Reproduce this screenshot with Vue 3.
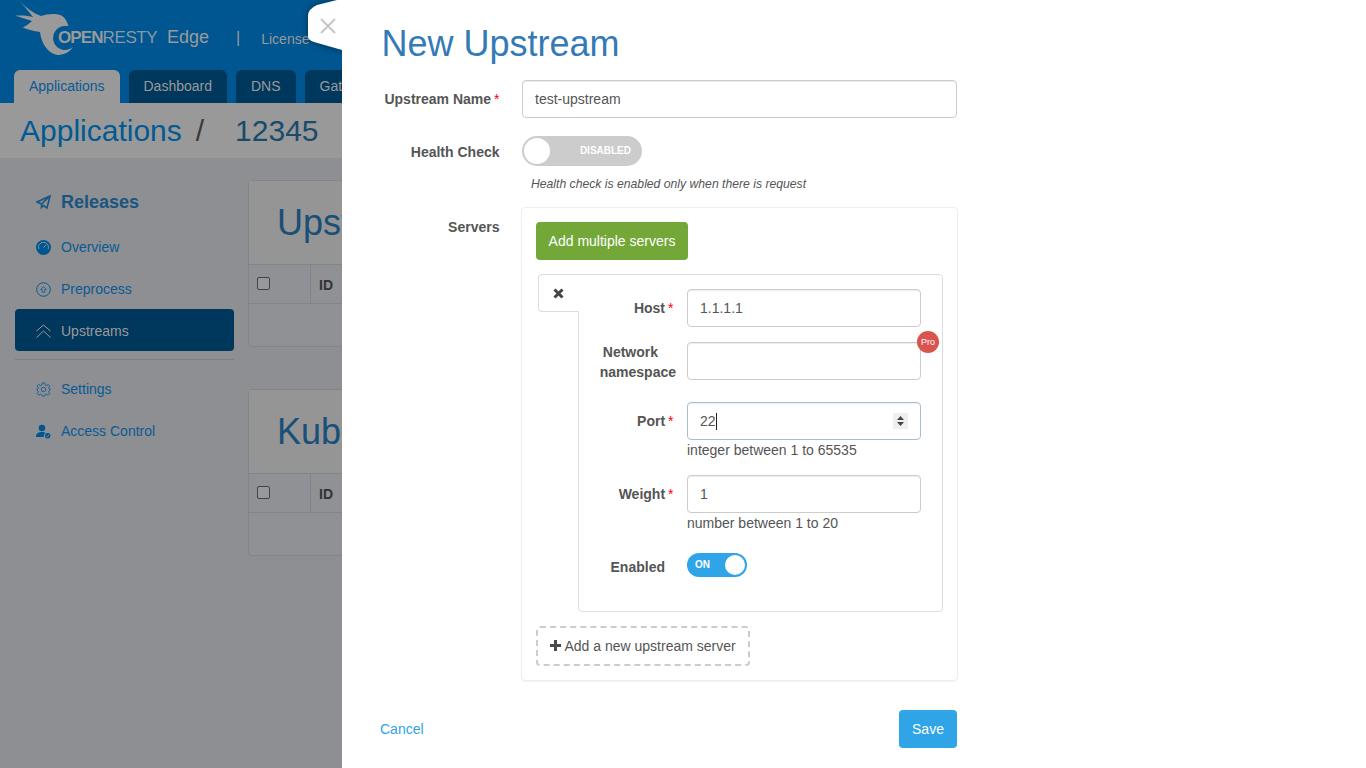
<script setup>
const navTabs = ['Dashboard', 'DNS', 'Gateway']

const sideItems = [
  { label: 'Overview', icon: 'gauge' },
  { label: 'Preprocess', icon: 'circle' },
  { label: 'Upstreams', icon: 'chevrons', active: true },
]
</script>

<template>
  <div class="page">
    <header class="topbar">
      <div class="brand">
        <svg class="bird" width="62" height="58" viewBox="14 0 62 58">
          <path fill="#9a9a9a" d="M20 1 C26 8 33 13 41 16 C47 14 55 13 60 15 C64 16 67 21 68.500 26 L64 26 A12 12 0 1 0 73 47 C69 53 63 55 57 55 C47 53 41 42 40 32 C34 31 28 30 22.700 27.500 C26 26 29 24 32 21 C26 19 20 17 15 15.700 C22 15 28 15.500 33 17 C29 12 24 6 20 1 Z" />
        </svg>
        <span class="wordmark"><b>OPEN</b><span class="resty">RESTY</span></span>
        <span class="edge">Edge</span>
        <span class="sep">|</span>
        <span class="license">License</span>
      </div>
      <nav class="tabs">
        <a class="tab tab-active">Applications</a>
        <a v-for="t in navTabs" :key="t" class="tab">{{ t }}</a>
      </nav>
    </header>

    <div class="crumbs">
      <span class="crumb-link">Applications</span>
      <span class="crumb-sep">/</span>
      <span class="crumb-app">12345</span>
    </div>

    <div class="content">
      <aside class="sidebar">
        <div class="side-head">
          <svg width="15" height="15" viewBox="0 0 15 15">
            <path fill="none" stroke="#1a5580" stroke-width="1.6" d="M14 1 L1 7 L5.500 9 L14 1 L11 13 L7.500 10.500 L5.500 12.500 L5.500 9" />
          </svg>
          <span>Releases</span>
        </div>
        <a v-for="item in sideItems" :key="item.label" class="side-item" :class="{ active: item.active }">
          <svg v-if="item.icon === 'gauge'" width="15" height="15" viewBox="0 0 15 15">
            <circle cx="7.500" cy="7.500" r="7.500" fill="#00568f" />
            <path fill="none" stroke="#8d8f93" stroke-width="1" d="M2.800 9 A5 5 0 1 1 12.200 9" />
            <path stroke="#8d8f93" stroke-width="1" d="M7.500 7.500 L10 5" />
          </svg>
          <svg v-else-if="item.icon === 'circle'" width="15" height="15" viewBox="0 0 15 15">
            <circle cx="7.500" cy="7.500" r="6.800" fill="none" stroke="#0a5a94" stroke-width="1" />
            <path fill="none" stroke="#0a5a94" stroke-width=".8" d="M7.500 4.500 L10.300 7.500 H8.800 V10.300 H6.200 V7.500 H4.700 Z" />
          </svg>
          <svg v-else width="15" height="15" viewBox="0 0 15 15">
            <path fill="none" stroke="#9a9a9a" stroke-width="1" d="M.5 7 L7.500 1 L14.500 7 M.5 13.500 L7.500 7 L14.500 13.500" />
          </svg>
          <span>{{ item.label }}</span>
        </a>
        <div class="side-rule"></div>
        <a class="side-item">
          <svg width="15" height="15" viewBox="0 0 24 24">
            <circle cx="12" cy="12" r="3.600" fill="none" stroke="#0a5a94" stroke-width="1.400" />
            <path fill="none" stroke="#0a5a94" stroke-width="1.400" d="M10 1.500 H14 L14.600 4.700 L16.900 5.700 L19.600 3.900 L22.100 6.400 L20.300 9.100 L21.300 11.400 L23 12 L21.300 13.600 L20.300 15.900 L22.100 18.600 L19.600 21.100 L16.900 19.300 L14.600 20.300 L14 22.500 H10 L9.400 20.300 L7.100 19.300 L4.400 21.100 L1.900 18.600 L3.700 15.900 L2.700 13.600 L1 12 L2.700 11.400 L3.700 9.100 L1.900 6.400 L4.400 3.900 L7.100 5.700 L9.400 4.700 Z" />
          </svg>
          <span>Settings</span>
        </a>
        <a class="side-item">
          <svg width="15" height="15" viewBox="0 0 15 15">
            <circle cx="6" cy="4" r="3.300" fill="#00568f" />
            <path fill="#00568f" d="M0 13 C0 9 3 8 6 8 C8 8 9 8.500 9.500 9 C8 10 7.500 11.500 8 13 Z" />
            <circle cx="11.700" cy="11.700" r="2.700" fill="#00568f" />
            <path fill="none" stroke="#8d8f93" stroke-width=".9" d="M10.400 11.800 L11.400 12.800 L13 10.800" />
          </svg>
          <span>Access Control</span>
        </a>
      </aside>

      <main class="main">
        <section class="card">
          <h2>Upstreams</h2>
          <div class="thead">
            <div class="check-cell"><span class="check"></span></div>
            <div class="id-cell">ID</div>
          </div>
          <div class="tbody"></div>
        </section>
        <section class="card">
          <h2>Kubernetes</h2>
          <div class="thead">
            <div class="check-cell"><span class="check"></span></div>
            <div class="id-cell">ID</div>
          </div>
          <div class="tbody"></div>
        </section>
      </main>
    </div>

    <!-- side panel sits over the dimmed page -->
    <div class="close-tab">
      <div class="close-shape">
        <svg width="16" height="16" viewBox="0 0 16 16">
          <path stroke="#c4c4c4" stroke-width="1.800" d="M1 1 L15 15 M15 1 L1 15" />
        </svg>
      </div>
    </div>

    <div class="drawer">
      <h1>New Upstream</h1>

      <div class="row">
        <label class="label req">Upstream Name</label>
        <div class="control"><input class="input" value="test-upstream" /></div>
      </div>

      <div class="row row-health">
        <label class="label">Health Check</label>
        <div class="control">
          <div class="switch switch-off"><span class="knob"></span><span class="switch-text">DISABLED</span></div>
          <p class="hint">Health check is enabled only when there is request</p>
        </div>
      </div>

      <div class="row row-servers">
        <label class="label label-servers">Servers</label>
        <div class="panel">
          <button class="btn-green">Add multiple servers</button>

          <div class="server">
            <div class="server-tab">
              <svg width="11" height="11" viewBox="0 0 11 11">
                <path stroke="#444" stroke-width="3" d="M1.500 1.500 L9.500 9.500 M9.500 1.500 L1.500 9.500" />
              </svg>
            </div>

            <div class="field">
              <label class="flabel req">Host</label>
              <input class="input" value="1.1.1.1" />
            </div>

            <div class="field field-ns">
              <label class="flabel ns"><span class="ns-a">Network</span><span>namespace</span></label>
              <div class="pro-wrap">
                <input class="input" />
                <span class="pro">Pro</span>
              </div>
            </div>

            <div class="field field-port">
              <label class="flabel req">Port</label>
              <div class="grow">
                <div class="port-box">
                  <span class="port-val">22</span><span class="caret"></span>
                  <span class="spinner">
                    <svg width="9" height="12" viewBox="0 0 9 12">
                      <path fill="#444" d="M4.500 1 L8 5 H1 Z M4.500 11 L1 7 H8 Z" />
                    </svg>
                  </span>
                </div>
                <div class="help">integer between 1 to 65535</div>
              </div>
            </div>

            <div class="field field-weight">
              <label class="flabel req">Weight</label>
              <div class="grow">
                <input class="input" value="1" />
                <div class="help">number between 1 to 20</div>
              </div>
            </div>

            <div class="field field-enabled">
              <label class="flabel enabled">Enabled</label>
              <div class="switch-on"><span class="on-text">ON</span><span class="knob-on"></span></div>
            </div>
          </div>

          <button class="btn-add">
            <svg width="11" height="11" viewBox="0 0 11 11">
              <path fill="#4a4a4a" d="M4 0 H7 V4 H11 V7 H7 V11 H4 V7 H0 V4 H4 Z" />
            </svg>
            Add a new upstream server
          </button>
        </div>
      </div>

      <div class="footer">
        <a class="cancel">Cancel</a>
        <button class="save">Save</button>
      </div>
    </div>
  </div>
</template>

<style scoped>
.page {
  position: relative;
  width: 1366px;
  height: 768px;
  overflow: hidden;
  background: #8d8f93;
  font-family: "Liberation Sans", Arial, sans-serif;
  font-size: 14px;
  color: #555;
}

.topbar {
  height: 103px;
  background: #005690;
  display: flex;
  flex-direction: column;
  box-sizing: border-box;
  padding-left: 14px;
}

.brand {
  height: 70px;
  display: flex;
  align-items: center;
  position: relative;
  color: #9a9a9a;
}

.bird {
  position: absolute;
  left: 0;
  top: 0;
}

.wordmark {
  position: relative;
  margin-left: 44px;
  margin-top: 5px;
  font-size: 17px;
  width: 100px;
  flex-shrink: 0;
  white-space: nowrap;
  color: #9a9a9a;
}

.wordmark b {
  letter-spacing: -0.9px;
}

.resty {
  letter-spacing: -0.4px;
  color: #8b98a3;
}

.edge {
  margin-left: 9px;
  margin-top: 5px;
  font-size: 18px;
}

.sep {
  margin-left: 27px;
  margin-top: 5px;
  font-size: 16px;
}

.license {
  margin-left: 21px;
  margin-top: 8px;
}

.tabs {
  display: flex;
  gap: 9px;
}

.tab {
  height: 33px;
  line-height: 32px;
  padding: 0 15px;
  background: #00375c;
  color: #9a9a9a;
  border-radius: 6px 6px 0 0;
}

.tab-active {
  background: #999;
  color: #0a5a94;
}

.crumbs {
  height: 55px;
  background: #999;
  display: flex;
  align-items: center;
  box-sizing: border-box;
  padding: 0 0 0 20px;
  font-size: 30px;
}

.crumb-link {
  color: #005a94;
}

.crumb-sep {
  margin-left: 14px;
  color: #3a3a3a;
}

.crumb-app {
  margin-left: 31px;
  font-size: 30px;
  color: #1a4a6c;
}

.content {
  display: flex;
}

.sidebar {
  width: 219px;
  margin-left: 15px;
  padding-top: 22px;
}

.side-head {
  height: 44px;
  margin-bottom: 1px;
  padding-left: 21px;
  display: flex;
  align-items: center;
  gap: 10px;
  font-size: 18px;
  font-weight: 700;
  color: #1a5580;
}

.side-item {
  height: 42px;
  box-sizing: border-box;
  padding: 2px 0 0 21px;
  display: flex;
  align-items: center;
  gap: 10px;
  color: #0a5a94;
  border-radius: 4px;
}

.side-item.active {
  background: #00375c;
  color: #9a9a9a;
}

.side-rule {
  height: 1px;
  background: #7b7e85;
  margin: 8px 0 7px;
}

.main {
  margin-left: 14px;
  padding-top: 22px;
  flex: 1;
}

.card {
  width: 500px;
  height: 167px;
  margin-bottom: 42px;
  box-sizing: border-box;
  border: 1px solid #80858c;
  border-radius: 4px;
  background: #8f9195;
}

.card h2 {
  margin: 0;
  height: 83px;
  line-height: 83px;
  padding-left: 28px;
  font-size: 36px;
  font-weight: 400;
  color: #1a4f78;
  background: #959595;
  white-space: nowrap;
  overflow: hidden;
}

.thead {
  height: 40px;
  display: flex;
  box-sizing: border-box;
  border-top: 1px solid #80858c;
  border-bottom: 1px solid #80858c;
}

.check-cell {
  width: 62px;
  border-right: 1px solid #80858c;
  padding: 12px 0 0 8px;
  box-sizing: border-box;
}

.check {
  display: block;
  width: 11px;
  height: 11px;
  border: 1px solid #444;
  border-radius: 2px;
  background: #96989c;
}

.id-cell {
  padding: 12px 0 0 8px;
  font-weight: 700;
  color: #333;
}

.close-tab {
  position: absolute;
  left: 308px;
  top: 0;
  filter: drop-shadow(0 0 3px rgba(0, 0, 0, 0.45));
}

.close-shape {
  width: 50px;
  height: 50px;
  background: #fff;
  clip-path: path("M0 16 Q0 9 9 5 L29 0 L50 0 L50 50 L34 50 L6 42 Q0 40 0 36 Z");
  padding: 18px 0 0 12px;
  box-sizing: border-box;
}

.drawer {
  position: absolute;
  left: 342px;
  top: 0;
  right: 0;
  bottom: 0;
  background: #fff;
  padding-left: 40px;
}

h1 {
  margin: 0 0 0 -0.5px;
  padding-top: 22px;
  height: 80px;
  box-sizing: border-box;
  font-size: 36px;
  line-height: 44px;
  font-weight: 400;
  color: #337ab7;
}

.row {
  width: 575px;
  display: flex;
}

.label {
  width: 117.5px;
  flex-shrink: 0;
  text-align: right;
  font-weight: 700;
  line-height: 38px;
  white-space: nowrap;
}

.req::after {
  content: "*";
  color: #f00;
  margin-left: 3px;
  font-weight: 400;
}

.control {
  margin-left: 22.5px;
  flex: 1;
}

.input {
  display: block;
  width: 100%;
  height: 38px;
  box-sizing: border-box;
  border: 1px solid #ccc;
  border-radius: 4px;
  padding: 0 12px;
  font: inherit;
  color: #555;
  background: #fff;
  outline: none;
  box-shadow: inset 0 1px 1px rgba(0, 0, 0, 0.075);
}

.row-health {
  margin-top: 18px;
}

.row-health .label {
  line-height: 32px;
}

.switch {
  width: 120px;
  height: 30px;
  border-radius: 15px;
  background: #ccc;
  position: relative;
}

.knob {
  position: absolute;
  left: 2px;
  top: 2px;
  width: 26px;
  height: 26px;
  border-radius: 50%;
  background: #fff;
}

.switch-text {
  position: absolute;
  right: 11px;
  top: 8px;
  font-size: 10px;
  line-height: 13px;
  font-weight: 700;
  color: #fff;
}

.hint {
  margin: 10px 0 0 9px;
  font-size: 12.2px;
  line-height: 17px;
  font-style: italic;
  white-space: nowrap;
}

.row-servers {
  margin-top: 14px;
}

.label-servers {
  line-height: 40px;
}

.panel {
  margin-left: 21.5px;
  width: 437px;
  height: 474px;
  flex-shrink: 0;
  box-sizing: border-box;
  border: 1px solid #eee;
  border-radius: 4px;
  padding: 14px;
  box-shadow: 0 1px 1px rgba(0, 0, 0, 0.05);
}

.btn-green {
  display: block;
  height: 38px;
  width: 152px;
  border: 0;
  border-radius: 4px;
  background: #73a839;
  color: #fff;
  font: inherit;
}

.server {
  position: relative;
  margin: 14px 0 0 42px;
  width: 365px;
  height: 338px;
  box-sizing: border-box;
  border: 1px solid #ddd;
  border-radius: 0 4px 4px 4px;
  padding-top: 14px;
}

.server-tab {
  position: absolute;
  left: -41px;
  top: -1px;
  width: 41px;
  height: 38px;
  box-sizing: border-box;
  border: 1px solid #ddd;
  border-right: 0;
  border-radius: 4px 0 0 4px;
  background: #fff;
  padding: 11px 0 0 14px;
}

.server-tab::after {
  content: "";
  position: absolute;
  right: -1px;
  top: 0;
  width: 1px;
  height: 35px;
  background: #fff;
}

.field {
  display: flex;
  width: 342px;
}

.flabel {
  width: 94.5px;
  flex-shrink: 0;
  margin-right: 13.5px;
  text-align: right;
  font-weight: 700;
  line-height: 38px;
  white-space: nowrap;
}

.field > .input,
.grow,
.pro-wrap {
  width: 234px;
  flex-shrink: 0;
}

.field-ns {
  margin-top: 15px;
}

.ns {
  margin-right: 11px;
  width: 97px;
  line-height: 20px;
}

.ns span {
  display: block;
}

.ns-a {
  padding-right: 18px;
}

.pro-wrap {
  position: relative;
}

.pro {
  position: absolute;
  right: -18px;
  top: -11px;
  width: 22px;
  height: 22px;
  border-radius: 50%;
  background: #d9534f;
  color: #fff;
  font-size: 9px;
  line-height: 22px;
  text-align: center;
}

.field-port {
  margin-top: 20px;
}

.port-box {
  height: 38px;
  box-sizing: border-box;
  border: 1px solid #a9bfd0;
  border-radius: 4px;
  padding-left: 12px;
  line-height: 36px;
  position: relative;
  box-shadow: inset 0 1px 1px rgba(0, 0, 0, 0.075);
}

.caret {
  display: inline-block;
  width: 1px;
  height: 17px;
  background: #222;
  vertical-align: -4px;
}

.spinner {
  position: absolute;
  right: 12px;
  top: 10px;
  width: 15px;
  height: 16px;
  background: #efefef;
  display: flex;
  align-items: center;
  justify-content: center;
}

.help {
  line-height: 20px;
}

.field-weight {
  margin-top: 15px;
}

.field-enabled {
  margin-top: 20px;
}

.enabled {
  width: 86px;
  margin-right: 22px;
  line-height: 28px;
}

.switch-on {
  width: 60px;
  height: 24px;
  border-radius: 12px;
  background: #2fa4e7;
  position: relative;
}

.on-text {
  position: absolute;
  left: 8px;
  top: 5px;
  font-size: 10px;
  line-height: 13px;
  font-weight: 700;
  color: #fff;
}

.knob-on {
  position: absolute;
  right: 2px;
  top: 2px;
  width: 20px;
  height: 20px;
  border-radius: 50%;
  background: #fff;
}

.btn-add {
  display: block;
  margin-top: 14px;
  height: 40px;
  width: 214px;
  box-sizing: border-box;
  border: 2px dashed #ccc;
  border-radius: 4px;
  background: #fff;
  color: #555;
  font: inherit;
  padding: 0;
}

.footer {
  position: absolute;
  left: 38px;
  top: 710px;
  width: 577px;
  height: 38px;
  display: flex;
  align-items: center;
  justify-content: space-between;
}

.cancel {
  color: #2fa4e7;
}

.save {
  width: 58px;
  height: 38px;
  border: 0;
  border-radius: 4px;
  background: #2fa4e7;
  color: #fff;
  font: inherit;
}
</style>
